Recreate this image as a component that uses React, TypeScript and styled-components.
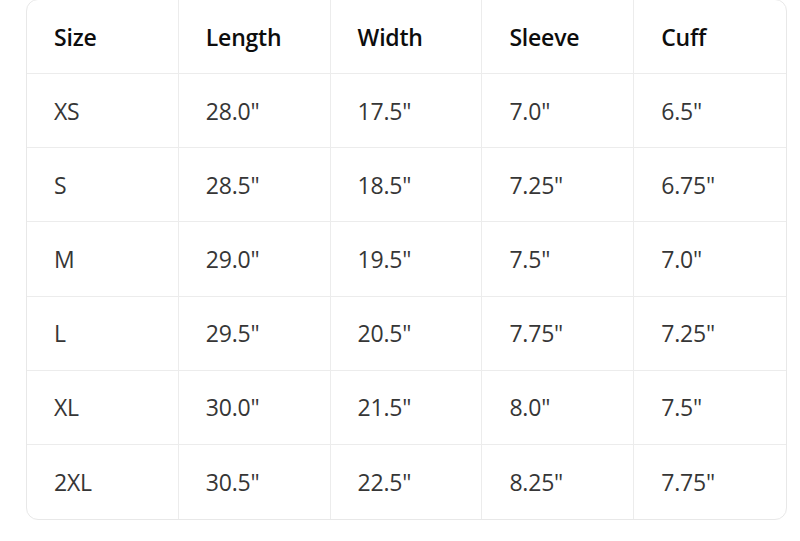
import React from "react";
import styled, { createGlobalStyle } from "styled-components";

const Global = createGlobalStyle`
  html, body { margin: 0; padding: 0; background: #ffffff; }
  body { font-family: "Open Sans", "Noto Sans", sans-serif; }
`;

const Page = styled.div`
  width: 800px;
  height: 541px;
  overflow: hidden;
  background: #ffffff;
  box-sizing: border-box;
  padding: 0 13px 0 26px;
`;

const Frame = styled.div`
  margin-top: -1px;
  width: 761px;
  border: 1px solid #e8e8e8;
  border-radius: 12px;
  overflow: hidden;
  box-sizing: border-box;
`;

const Table = styled.table`
  width: 100%;
  border-collapse: separate;
  border-spacing: 0;
  table-layout: fixed;
`;

const Row = styled.tr`
  height: 74.17px;
`;

const Cell = styled.td<{ $head?: boolean; $last?: boolean; $lastRow?: boolean }>`
  height: 74.17px;
  padding: 0 0 0 27px;
  box-sizing: border-box;
  vertical-align: middle;
  text-align: left;
  font-size: 23px;
  letter-spacing: -0.2px;
  font-weight: ${(p) => (p.$head ? 600 : 400)};
  color: ${(p) => (p.$head ? "#0d0d0d" : "#363636")};
  border-right: ${(p) => (p.$last ? "none" : "1px solid #ececec")};
  border-bottom: ${(p) => (p.$lastRow ? "none" : "1px solid #ececec")};
  white-space: nowrap;
`;

const headers = ["Size", "Length", "Width", "Sleeve", "Cuff"];
const rows = [
  ["XS", '28.0"', '17.5"', '7.0"', '6.5"'],
  ["S", '28.5"', '18.5"', '7.25"', '6.75"'],
  ["M", '29.0"', '19.5"', '7.5"', '7.0"'],
  ["L", '29.5"', '20.5"', '7.75"', '7.25"'],
  ["XL", '30.0"', '21.5"', '8.0"', '7.5"'],
  ["2XL", '30.5"', '22.5"', '8.25"', '7.75"'],
];

export default function App() {
  return (
    <Page>
      <Global />
      <Frame>
        <Table>
          <thead>
            <Row>
              {headers.map((h, i) => (
                <Cell as="th" key={h} $head $last={i === headers.length - 1}>
                  {h}
                </Cell>
              ))}
            </Row>
          </thead>
          <tbody>
            {rows.map((r, ri) => (
              <Row key={r[0]}>
                {r.map((v, i) => (
                  <Cell key={i} $last={i === r.length - 1} $lastRow={ri === rows.length - 1}>
                    {v}
                  </Cell>
                ))}
              </Row>
            ))}
          </tbody>
        </Table>
      </Frame>
    </Page>
  );
}
